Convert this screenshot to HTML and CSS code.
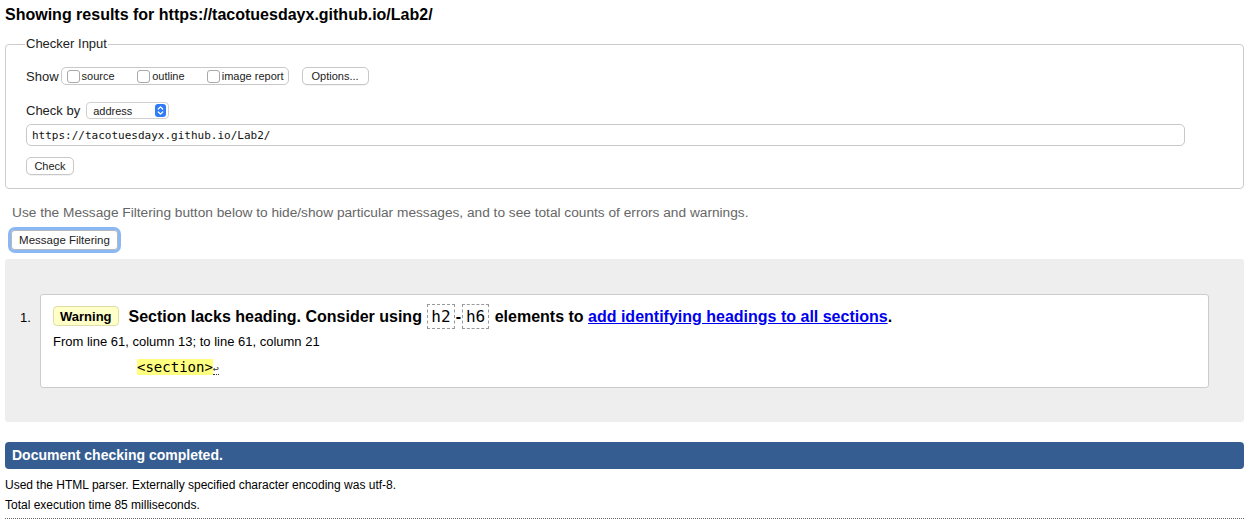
FILE: index.html
```html
<!DOCTYPE html>
<html lang="en">
<head>
<meta charset="utf-8">
<title>Nu Html Checker</title>
<link rel="stylesheet" href="styles.css">
</head>
<body>
<h2 class="title">Showing results for https://tacotuesdayx.github.io/Lab2/</h2>
<fieldset class="checker">
  <legend class="legend">Checker Input</legend>
  <div class="row row-show">
    <span class="lbl">Show</span>
    <span class="group">
      <label class="cb"><span class="box"></span>source</label>
      <label class="cb"><span class="box"></span>outline</label>
      <label class="cb"><span class="box"></span>image report</label>
    </span>
    <span class="btn btn-options">Options...</span>
  </div>
  <div class="row row-by">
    <span class="lbl">Check by</span>
    <span class="select">address
      <svg class="stepper" width="11" height="13" viewBox="0 0 11 13"><rect x="0" y="0" width="11" height="13" rx="3" fill="#2f7cf6"/><path d="M3.3 5 L5.5 2.9 L7.7 5" fill="none" stroke="#fff" stroke-width="1.3" stroke-linecap="round" stroke-linejoin="round"/><path d="M3.3 8 L5.5 10.1 L7.7 8" fill="none" stroke="#fff" stroke-width="1.3" stroke-linecap="round" stroke-linejoin="round"/></svg>
    </span>
  </div>
  <div class="row row-url">
    <span class="url">https://tacotuesdayx.github.io/Lab2/</span>
  </div>
  <div class="row row-check">
    <span class="btn btn-check">Check</span>
  </div>
</fieldset>
<p class="hint">Use the Message Filtering button below to hide/show particular messages, and to see total counts of errors and warnings.</p>
<div class="filter-wrap"><span class="btn btn-filter">Message Filtering</span></div>
<div class="results">
  <div class="msg-row">
    <span class="num">1.</span>
    <div class="msg">
      <p class="msg-head"><span class="badge">Warning</span><span class="msg-text">Section lacks heading. Consider using <code class="tag">h2</code>-<code class="tag">h6</code> elements to <a href="#" class="link">add identifying headings to all sections</a>.</span></p>
      <p class="loc">From line 61, column 13; to line 61, column 21</p>
      <p class="extract"><code><b class="hl">&lt;section&gt;</b><span class="ret">↩</span></code></p>
    </div>
  </div>
</div>
<div class="done">Document checking completed.</div>
<p class="foot">Used the HTML parser. Externally specified character encoding was utf-8.</p>
<p class="foot">Total execution time 85 milliseconds.</p>
<div class="rule"></div>
</body>
</html>
```

FILE: styles.css
```css
html, body {
  margin: 0;
  padding: 0;
  background: #fff;
}
body {
  padding: 0 15px 0 5px;
  font-family: "Liberation Sans", Arial, Helvetica, sans-serif;
  color: #000;
}
.title {
  margin: 4px 0 0;
  font-size: 16px;
  line-height: 22px;
  font-weight: bold;
}
.checker {
  margin: 10px 0 0;
  padding: 0 20px 13px 20px;
  border: 1px solid #ccc;
  border-radius: 4px;
  min-width: 0;
}
.legend {
  font-size: 13px;
  line-height: 16px;
  padding: 0 1px;
  margin-left: -1px;
  color: #222;
}
.row {
  display: flex;
  align-items: center;
}
.row-show {
  height: 18px;
  margin-top: 15px;
}
.lbl {
  font-size: 13px;
  color: #222;
  margin-right: 2px;
}
.group {
  display: flex;
  align-items: center;
  height: 16px;
  border: 1px solid #c8c8c8;
  border-radius: 5px;
  padding: 0 4px 0 5px;
  width: 217px;
  justify-content: space-between;
}
.cb {
  display: flex;
  align-items: center;
  font-size: 11px;
  color: #222;
}
.box {
  width: 11px;
  height: 11px;
  border: 1px solid #a9a9a9;
  border-radius: 3px;
  margin-right: 2px;
  background: #fff;
}
.cb:nth-child(1) { width: 67px; }
.cb:nth-child(2) { width: 66px; }
.btn {
  display: inline-flex;
  align-items: center;
  justify-content: center;
  font-size: 11px;
  color: #222;
  border: 1px solid #c8c8c8;
  border-radius: 5px;
  background: #fff;
  box-shadow: 0 1px 0 rgba(0,0,0,0.05);
}
.btn-options {
  margin-left: 13px;
  width: 65px;
  height: 16px;
}
.row-by {
  height: 17px;
  margin-top: 17px;
}
.select {
  display: inline-flex;
  align-items: center;
  justify-content: space-between;
  margin-left: 4px;
  width: 73px;
  height: 15px;
  padding: 0 2px 0 6px;
  font-size: 11px;
  color: #222;
  border: 1px solid #d0d0d0;
  border-radius: 4px;
}
.stepper { display: block; }
.row-url {
  margin-top: 5px;
  width: 1159px;
  border: 1px solid #c8c8c8;
  border-radius: 5px;
  box-sizing: border-box;
  height: 22px;
  padding-left: 5px;
}
.url {
  font-family: "DejaVu Sans Mono", Menlo, monospace;
  font-size: 11px;
  color: #111;
}
.row-check {
  margin-top: 11px;
  height: 18px;
}
.btn-check {
  width: 46px;
  height: 16px;
  font-size: 11px;
}
.hint {
  margin: 16px 0 0 7px;
  font-size: 13.7px;
  line-height: 16px;
  color: #666;
}
.filter-wrap {
  display: flex;
  margin: 6px 0 0 3px;
  height: 26px;
}
.btn-filter {
  box-sizing: border-box;
  width: 113px;
  height: 26px;
  border: 3px solid #8ab8f4;
  border-radius: 7px;
  box-shadow: inset 0 0 0 1px #b8b8b8;
  font-size: 11.5px;
}
.results {
  margin-top: 6px;
  background: #eee;
  border-radius: 3px;
  padding: 35px 35px 34px 0;
}
.msg-row {
  display: flex;
  align-items: flex-start;
}
.num {
  width: 35px;
  box-sizing: border-box;
  padding-left: 15px;
  font-size: 13px;
  margin-top: 16px;
}
.msg {
  flex: 1;
  background: #fff;
  border: 1px solid #ccc;
  border-radius: 3px;
  padding: 8px 12px 9px 12px;
}
.msg-head {
  margin: 0;
  display: flex;
  align-items: center;
  height: 26px;
}
.badge {
  display: inline-flex;
  align-items: center;
  height: 18px;
  padding: 0 6px;
  background: #ffffc8;
  border: 1px solid #e0dca8;
  border-radius: 4px;
  font-size: 13px;
  font-weight: bold;
  margin-right: 10px;
}
.msg-text {
  font-size: 16px;
  font-weight: bold;
  white-space: nowrap;
}
.tag {
  font-family: "DejaVu Sans Mono", Menlo, monospace;
  font-weight: normal;
  font-size: 16px;
  border: 1px dashed #999;
  padding: 2px 3px;
  margin: 0 1px;
}
.link {
  color: #0000ee;
  text-decoration: underline;
}
.loc {
  margin: 5px 0 0;
  font-size: 13px;
  line-height: 16px;
}
.extract {
  margin: 8px 0 0 84px;
  font-size: 14px;
  line-height: 18px;
}
.extract code {
  font-family: "DejaVu Sans Mono", Menlo, monospace;
  font-size: 14px;
}
.hl {
  background: #ffff80;
  font-weight: normal;
}
.ret {
  font-size: 10px;
  border-bottom: 1px dotted #333;
  color: #333;
}
.done {
  margin-top: 20px;
  background: #365d91;
  color: #fff;
  border-radius: 4px;
  height: 27px;
  line-height: 27px;
  padding-left: 7px;
  font-size: 14px;
  font-weight: bold;
}
.foot {
  margin: 9px 0 0;
  font-size: 12px;
  line-height: 15px;
}
.foot + .foot {
  margin-top: 5px;
}
.rule {
  margin-top: 5px;
  border-top: 1px dotted #666;
}
```
